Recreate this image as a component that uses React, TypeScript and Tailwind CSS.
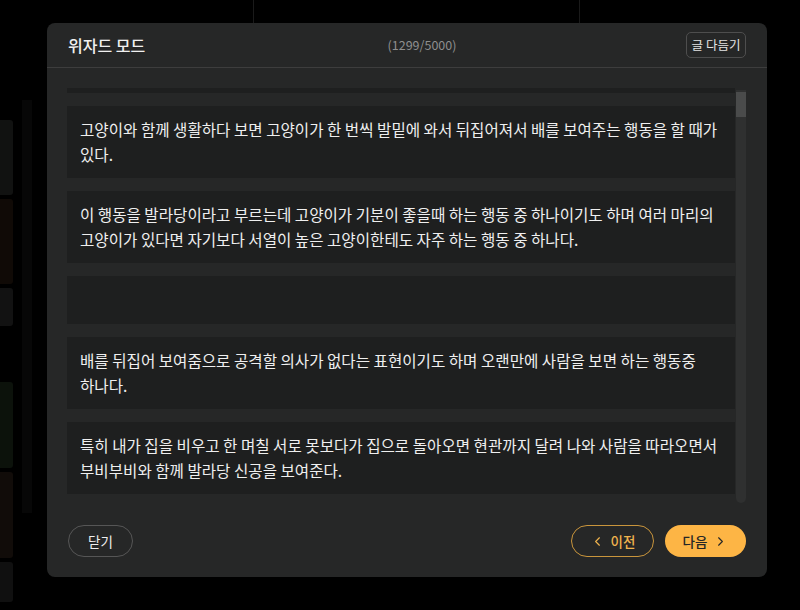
import { ChevronLeft, ChevronRight } from "lucide-react";

const paragraphs: string[][] = [
  ["고양이와 함께 생활하다 보면 고양이가 한 번씩 발밑에 와서 뒤집어져서 배를 보여주는 행동을 할 때가", "있다."],
  [
    "이 행동을 발라당이라고 부르는데 고양이가 기분이 좋을때 하는 행동 중 하나이기도 하며 여러 마리의",
    "고양이가 있다면 자기보다 서열이 높은 고양이한테도 자주 하는 행동 중 하나다.",
  ],
  [],
  ["배를 뒤집어 보여줌으로 공격할 의사가 없다는 표현이기도 하며 오랜만에 사람을 보면 하는 행동중", "하나다."],
  [
    "특히 내가 집을 비우고 한 며칠 서로 못보다가 집으로 돌아오면 현관까지 달려 나와 사람을 따라오면서",
    "부비부비와 함께 발라당 신공을 보여준다.",
  ],
];

function Card({ lines }: { lines: string[] }) {
  if (lines.length === 0) {
    return <div className="h-[48px] shrink-0 bg-[#1e1f1f]" />;
  }
  return (
    <div className="shrink-0 bg-[#1e1f1f] px-[13px] py-[11px] text-[15.6px] leading-[25px] text-[#efefef] whitespace-nowrap">
      {lines.map((l, i) => (
        <div key={i}>{l}</div>
      ))}
    </div>
  );
}

export default function App() {
  return (
    <div
      className="relative h-[610px] w-[800px] overflow-hidden bg-black"
      style={{ fontFamily: "'Noto Sans CJK KR', 'Noto Sans', sans-serif" }}
    >
      {/* dimmed page behind the dialog */}
      <div className="flex h-full">
        <div className="flex w-[13px] flex-col gap-[4px] pt-[120px]">
          <div className="h-[75px] rounded-r-[3px] bg-[#111211]" />
          <div className="h-[85px] rounded-r-[3px] bg-[#100a06]" />
          <div className="h-[38px] rounded-r-[3px] bg-[#121212]" />
          <div className="h-[48px]" />
          <div className="h-[86px] rounded-r-[3px] bg-[#0c120b]" />
          <div className="h-[86px] rounded-r-[3px] bg-[#110c09]" />
          <div className="h-[40px] rounded-r-[3px] bg-[#101010]" />
        </div>
        <div className="ml-[9px] mt-[100px] h-[413px] w-[10px] bg-[#070707]" />
        <div className="ml-[221px] h-[23px] w-px bg-[#1a1a1a]" />
        <div className="ml-[325px] h-[23px] w-px bg-[#1a1a1a]" />
      </div>

      {/* dialog */}
      <div className="absolute left-[47px] top-[23px] flex h-[554px] w-[720px] flex-col rounded-[8px] bg-[#262727]">
        <div className="relative flex h-[45px] shrink-0 items-center justify-between border-b border-[#3d3d3d] pl-[21px] pr-[21px]">
          <span className="text-[16px] font-medium text-[#f0f0f0]">위자드 모드</span>
          <span className="absolute left-[calc(50%+15px)] -translate-x-1/2 text-[12.5px] text-[#8e8e8e]">
            (1299/5000)
          </span>
          <button className="h-[26px] w-[60px] rounded-[5px] border border-[#4e4e4e] text-[12.5px] text-[#e4e4e4]">
            글 다듬기
          </button>
        </div>

        <div className="mt-[20px] flex h-[415px] pl-[20px] pr-[21px]">
          <div className="flex-1 overflow-hidden">
            <div className="-mt-[67px] flex flex-col gap-[13px]">
              <div className="h-[72px] shrink-0 bg-[#1e1f1f]" />
              {paragraphs.map((p, i) => (
                <Card key={i} lines={p} />
              ))}
            </div>
          </div>
          <div className="ml-px mt-[2px] w-[10px] rounded-b-full bg-[#2f3030]">
            <div className="mt-[2px] h-[25px] bg-[#4a4b4b]" />
          </div>
        </div>

        <div className="flex flex-1 items-start justify-between px-[21px] pt-[22px]">
          <button className="h-[32px] w-[65px] rounded-full border border-[#565656] text-[13.5px] text-[#eeeeee]">
            닫기
          </button>
          <div className="flex gap-[11px]">
            <button className="flex h-[32px] w-[83px] items-center justify-center gap-[6px] rounded-full border border-[#c9953c] text-[13.5px] font-medium text-[#f0b44e]">
              <ChevronLeft size={15} strokeWidth={1.8} />
              이전
            </button>
            <button className="flex h-[32px] w-[81px] items-center justify-center gap-[6px] rounded-full bg-[#fdb545] text-[13.5px] font-medium text-[#262626]">
              다음
              <ChevronRight size={15} strokeWidth={1.8} />
            </button>
          </div>
        </div>
      </div>
    </div>
  );
}
